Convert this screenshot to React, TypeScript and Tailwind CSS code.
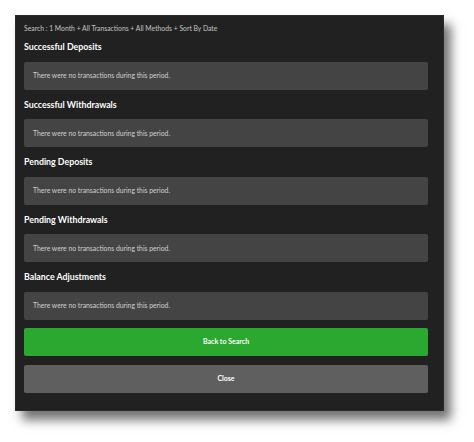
const sections = [
  'Successful Deposits',
  'Successful Withdrawals',
  'Pending Deposits',
  'Pending Withdrawals',
  'Balance Adjustments',
];

export default function App() {
  return (
    <div className="w-[474px] h-[442px] bg-white pl-[15px] pt-[15px] font-['Lato',sans-serif]">
      <div className="w-[429px] h-[396px] bg-[#212121] pl-[8px] pr-[15px] pt-[8px] shadow-[7px_9px_10px_rgba(0,0,0,0.55)] border border-[#2a2a2a]">
        <div className="h-[8px] leading-[8px] text-[6.8px] text-[#c4c4c4]">
          Search : 1 Month + All Transactions + All Methods + Sort By Date
        </div>

        {sections.map((title) => (
          <div key={title}>
            <div className="h-[29.5px] flex items-center text-[8.8px] font-bold text-white">
              {title}
            </div>
            <div className="h-[28px] rounded-[2px] bg-[#444444] flex items-center pl-[9px] text-[6.8px] text-[#d0d0d0]">
              There were no transactions during this period.
            </div>
          </div>
        ))}

        <button className="mt-[8px] w-full h-[28px] rounded-[2px] bg-[#2ba82f] text-white text-[7px] font-bold flex items-center justify-center">
          Back to Search
        </button>
        <button className="mt-[9px] w-full h-[28px] rounded-[2px] bg-[#5f5f5f] text-white text-[7px] font-bold flex items-center justify-center">
          Close
        </button>
      </div>
    </div>
  );
}
